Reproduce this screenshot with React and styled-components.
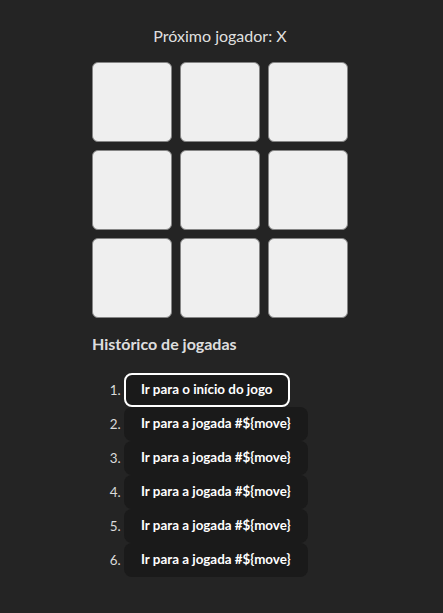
import React, { useState } from "react";
import styled, { createGlobalStyle } from "styled-components";

const GlobalStyle = createGlobalStyle`
  body {
    margin: 0;
    background: #242424;
    color: rgba(255, 255, 255, 0.87);
    font-family: Lato, "Open Sans", sans-serif;
    font-size: 16px;
    line-height: 1.5;
  }
`;

const Page = styled.div`
  display: flex;
  flex-direction: column;
  align-items: center;
  padding: 24px 3px 0 0;
`;

const Status = styled.div`
  font-size: 16px;
  line-height: 24px;
  text-align: center;
  margin-bottom: 14px;
`;

const Game = styled.div`
  width: 256px;
  display: flex;
  flex-direction: column;
`;

const Board = styled.div`
  display: grid;
  grid-template-columns: repeat(3, 80px);
  grid-auto-rows: 80px;
  gap: 8px;
`;

const Square = styled.button`
  box-sizing: border-box;
  margin: 0;
  padding: 0;
  background: #efefef;
  border: 1px solid #858585;
  border-radius: 6px;
  font-family: inherit;
  font-size: 40px;
  font-weight: 700;
  color: #242424;
  cursor: pointer;
`;

const Title = styled.h3`
  margin: 14px 0 17px;
  font-size: 16px;
  line-height: 24px;
  font-weight: 700;
`;

const Moves = styled.ol`
  margin: 0;
  padding-left: 32px;
  color: #dcdcdc;
  font-size: 13.4px;
`;

const Move = styled.li`
  height: 34px;
  line-height: 34px;
`;

const MoveButton = styled.button`
  box-sizing: border-box;
  height: 34px;
  padding: 0 ${(p) => (p.$active ? 15 : 16)}px;
  border: ${(p) => (p.$active ? "2px solid #fff" : "1px solid transparent")};
  border-radius: 8px;
  background: #1a1a1a;
  color: #fff;
  font-family: inherit;
  font-size: 13.4px;
  font-weight: 700;
  line-height: 1;
  vertical-align: top;
  cursor: pointer;
`;

export default function App() {
  const [squares, setSquares] = useState(Array(9).fill(null));
  const [xIsNext, setXIsNext] = useState(true);
  const moves = [0, 1, 2, 3, 4, 5];

  const handleClick = (i) => {
    if (squares[i]) return;
    const next = squares.slice();
    next[i] = xIsNext ? "X" : "O";
    setSquares(next);
    setXIsNext(!xIsNext);
  };

  return (
    <Page>
      <GlobalStyle />
      <Status>Próximo jogador: {xIsNext ? "X" : "O"}</Status>
      <Game>
        <Board>
          {squares.map((value, i) => (
            <Square key={i} onClick={() => handleClick(i)}>
              {value}
            </Square>
          ))}
        </Board>
        <Title>Histórico de jogadas</Title>
        <Moves>
          {moves.map((move) => (
            <Move key={move}>
              <MoveButton $active={move === 0}>
                {move > 0 ? "Ir para a jogada #${move}" : "Ir para o início do jogo"}
              </MoveButton>
            </Move>
          ))}
        </Moves>
      </Game>
    </Page>
  );
}
